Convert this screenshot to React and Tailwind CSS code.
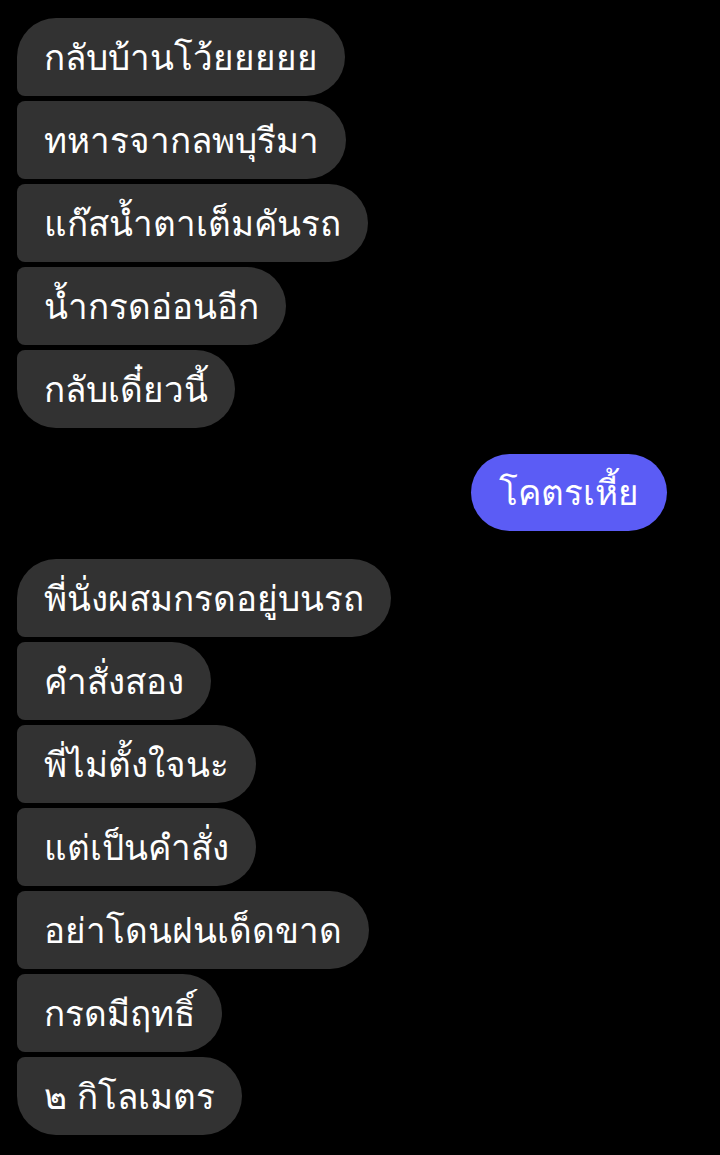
import React from 'react';

const groupOne = [
  'กลับบ้านโว้ยยยยย',
  'ทหารจากลพบุรีมา',
  'แก๊สน้ำตาเต็มคันรถ',
  'น้ำกรดอ่อนอีก',
  'กลับเดี๋ยวนี้',
];

const groupTwo = [
  'พี่นั่งผสมกรดอยู่บนรถ',
  'คำสั่งสอง',
  'พี่ไม่ตั้งใจนะ',
  'แต่เป็นคำสั่ง',
  'อย่าโดนฝนเด็ดขาด',
  'กรดมีฤทธิ์',
  '๒ กิโลเมตร',
];

// grouped bubbles: tight corners on the side that touches a neighbour
const cornerFor = (i, n) => {
  if (n === 1) return 'rounded-[39px]';
  if (i === 0) return 'rounded-[39px] rounded-bl-[8px]';
  if (i === n - 1) return 'rounded-[39px] rounded-tl-[8px]';
  return 'rounded-[39px] rounded-l-[8px]';
};

const Bubble = ({ text, corner }) => (
  <div
    className={`h-[78px] self-start flex items-center px-[27px] bg-[#323232] text-white text-[35px] leading-none ${corner}`}
  >
    {text}
  </div>
);

const Group = ({ items }) => (
  <div className="flex flex-col gap-[5px]">
    {items.map((t, i) => (
      <Bubble key={t} text={t} corner={cornerFor(i, items.length)} />
    ))}
  </div>
);

export default function App() {
  return (
    <div className='w-[720px] h-[1155px] bg-black overflow-hidden pt-[18px] pl-[17px] pr-[53px] font-["Liberation_Sans",sans-serif]'>
      <Group items={groupOne} />
      <div className="flex justify-end mt-[26px] mb-[28px]">
        <div className="h-[77px] flex items-center px-[28px] rounded-[39px] bg-[#5b5cf5] text-white text-[35px] leading-none">
          โคตรเหี้ย
        </div>
      </div>
      <Group items={groupTwo} />
    </div>
  );
}
